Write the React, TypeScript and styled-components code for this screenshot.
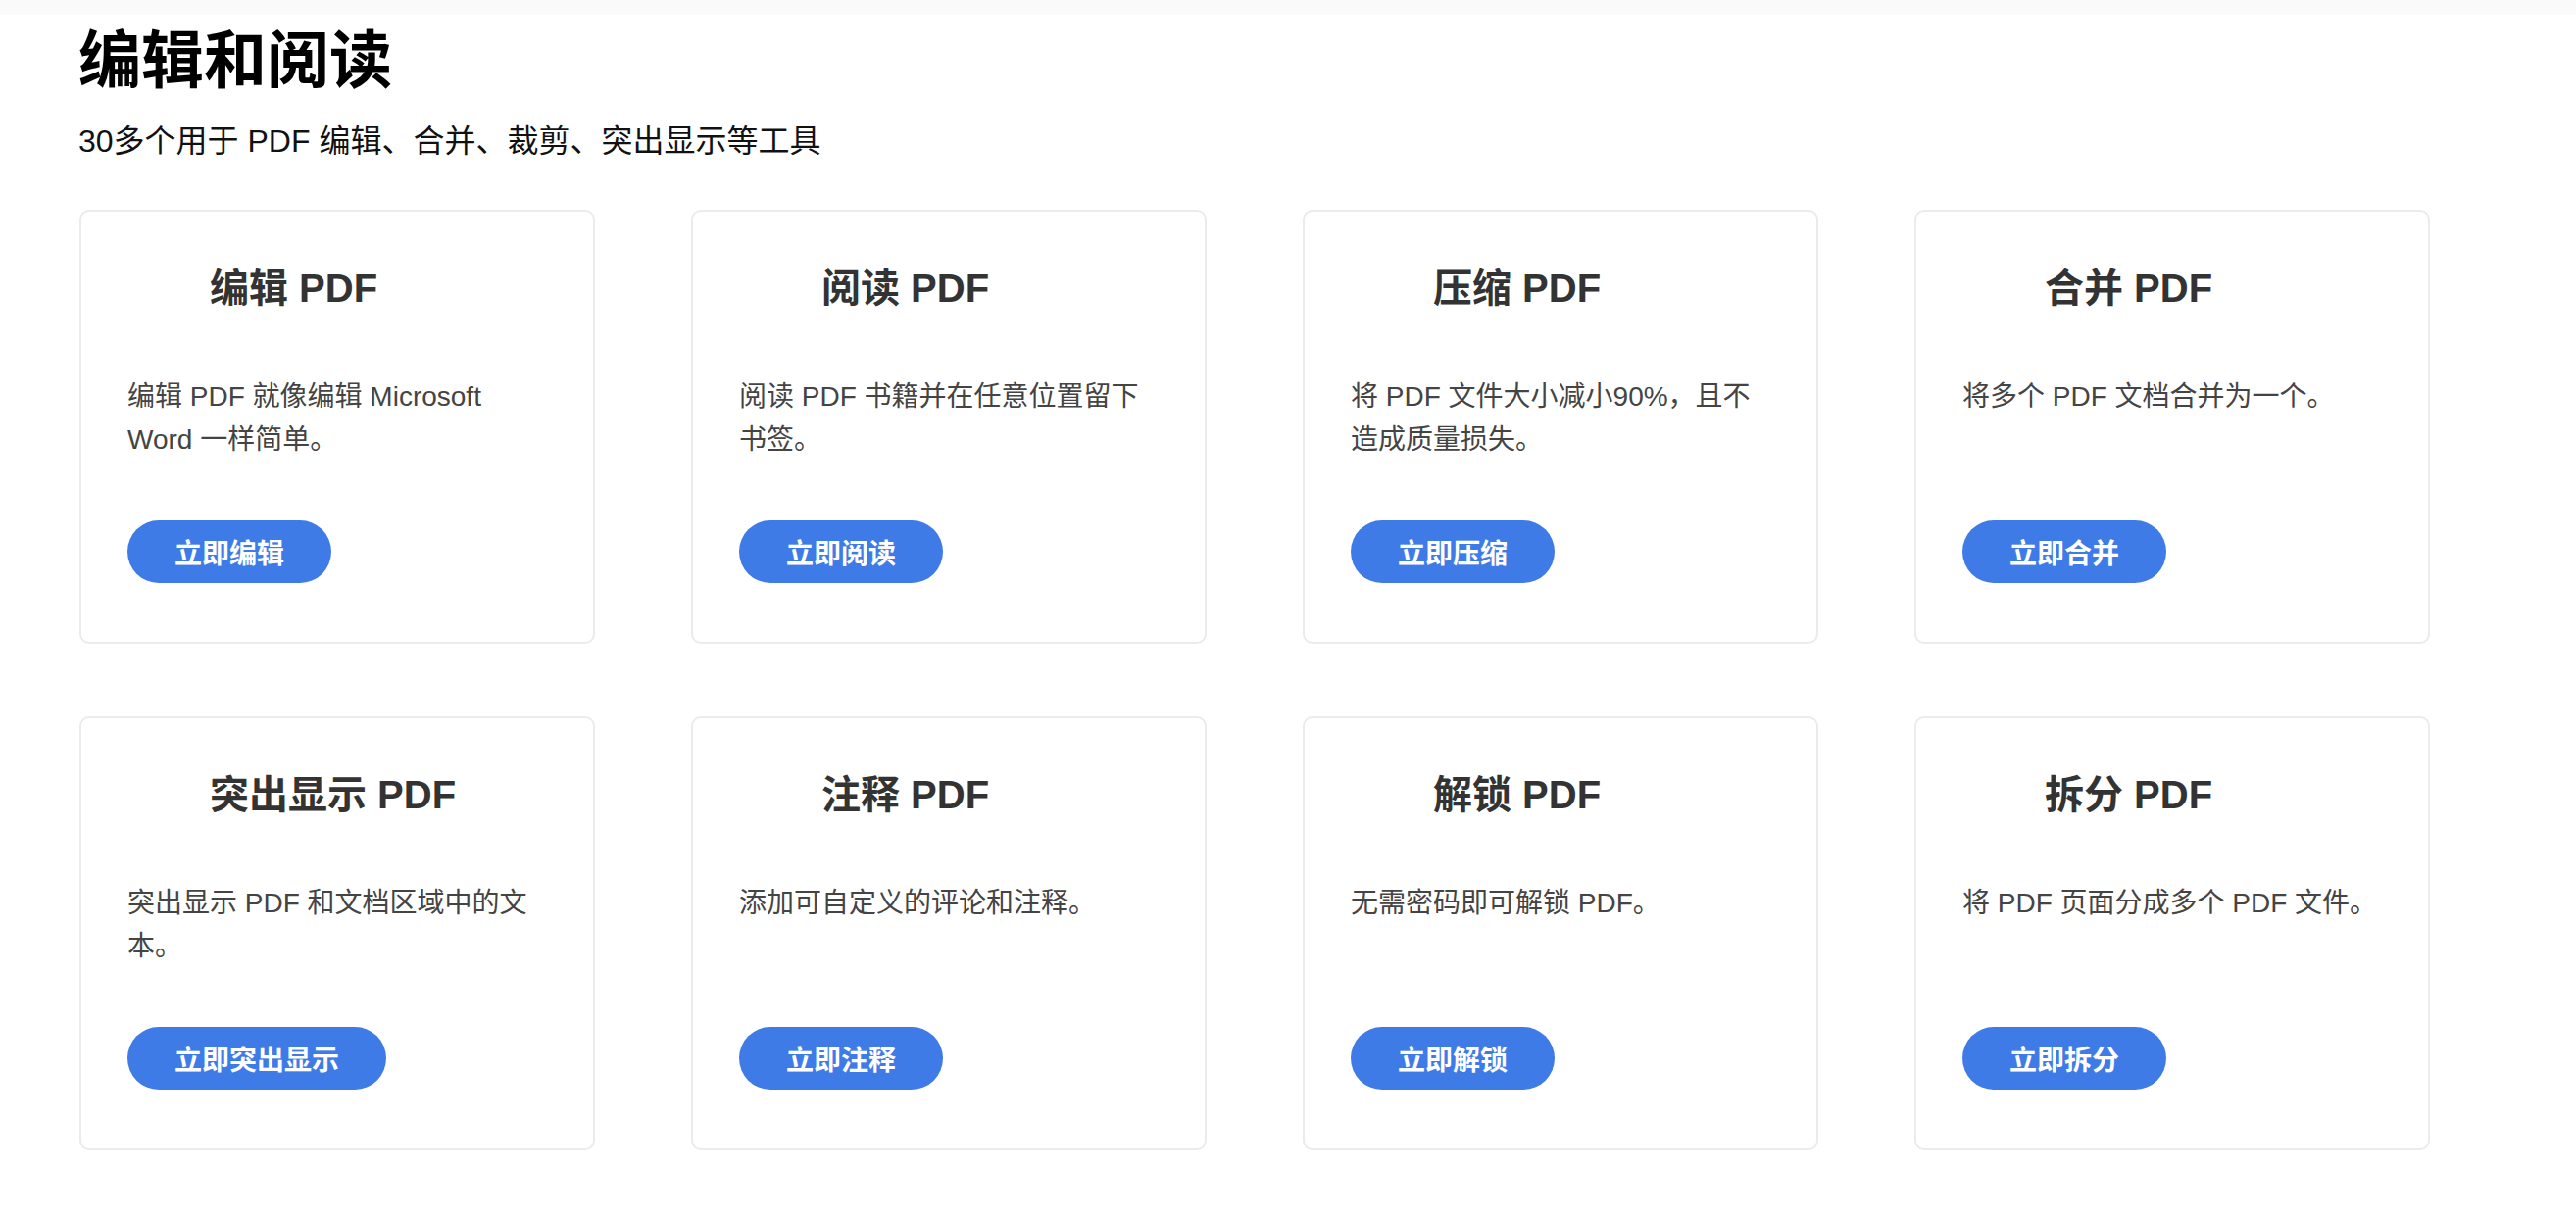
import React from 'react';
import styled, { createGlobalStyle } from 'styled-components';

const GlobalStyle = createGlobalStyle`
  html, body {
    margin: 0;
    padding: 0;
    background: #ffffff;
  }
  body {
    font-family: "Liberation Sans", "Noto Sans CJK SC", sans-serif;
    -webkit-font-smoothing: antialiased;
  }
`;

const TopStrip = styled.div`
  height: 15px;
  background: #fafafa;
`;

const Section = styled.section`
  padding: 0 80px 60px 80px;
`;

const Heading = styled.h1`
  margin: 9px 0 0 0;
  font-size: 64px;
  line-height: 77px;
  font-weight: 700;
  color: #000;
`;

const Subheading = styled.p`
  margin: 19px 0 0 0;
  font-size: 32px;
  line-height: 48px;
  color: #111;
`;

const Grid = styled.div`
  margin: 46px 0 0 1px;
  display: grid;
  grid-template-columns: repeat(4, 526px);
  column-gap: 98px;
  row-gap: 74px;
`;

const Card = styled.div`
  box-sizing: border-box;
  width: 526px;
  border: 2px solid #ebebeb;
  border-radius: 10px;
  padding: 50px 47px 60px 47px;
  display: flex;
  flex-direction: column;
  align-items: flex-start;
`;

const CardHead = styled.div`
  display: flex;
  align-items: center;
  gap: 20px;
  height: 56px;
`;

// icon image slot, left empty in the original
const IconSlot = styled.span`
  display: block;
  width: 64px;
  height: 56px;
`;

const CardTitle = styled.h3`
  margin: 0;
  font-size: 40px;
  line-height: 56px;
  font-weight: 700;
  color: #333;
`;

const CardText = styled.p`
  margin: 61px 0 0 0;
  width: 428px;
  min-height: 88px;
  font-size: 28px;
  line-height: 44px;
  color: #444;
`;

const ActionButton = styled.button`
  margin-top: 60px;
  height: 64px;
  padding: 0 48px;
  border: none;
  border-radius: 32px;
  background: #3f7be6;
  color: #fff;
  font-family: "Liberation Sans", "Noto Sans CJK SC", sans-serif;
  font-size: 28px;
  font-weight: 700;
  cursor: pointer;
`;

const tools = [
  { title: '编辑 PDF', text: '编辑 PDF 就像编辑 Microsoft Word 一样简单。', action: '立即编辑' },
  { title: '阅读 PDF', text: '阅读 PDF 书籍并在任意位置留下书签。', action: '立即阅读' },
  { title: '压缩 PDF', text: '将 PDF 文件大小减小90%，且不造成质量损失。', action: '立即压缩' },
  { title: '合并 PDF', text: '将多个 PDF 文档合并为一个。', action: '立即合并' },
  { title: '突出显示 PDF', text: '突出显示 PDF 和文档区域中的文本。', action: '立即突出显示' },
  { title: '注释 PDF', text: '添加可自定义的评论和注释。', action: '立即注释' },
  { title: '解锁 PDF', text: '无需密码即可解锁 PDF。', action: '立即解锁' },
  { title: '拆分 PDF', text: '将 PDF 页面分成多个 PDF 文件。', action: '立即拆分' },
];

const App = (): JSX.Element => {
  return (
    <>
      <GlobalStyle />
      <TopStrip />
      <Section>
        <Heading>编辑和阅读</Heading>
        <Subheading>30多个用于 PDF 编辑、合并、裁剪、突出显示等工具</Subheading>
        <Grid>
          {tools.map((t) => (
            <Card key={t.title}>
              <CardHead>
                <IconSlot />
                <CardTitle>{t.title}</CardTitle>
              </CardHead>
              <CardText>{t.text}</CardText>
              <ActionButton>{t.action}</ActionButton>
            </Card>
          ))}
        </Grid>
      </Section>
    </>
  );
};

export default App;
